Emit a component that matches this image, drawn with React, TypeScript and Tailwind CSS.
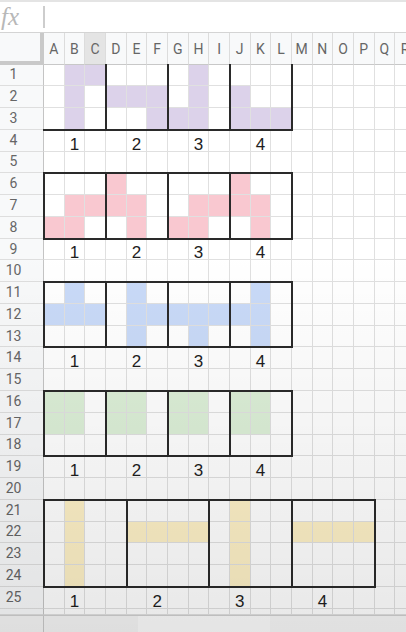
import React from 'react';

const COLS = ['A', 'B', 'C', 'D', 'E', 'F', 'G', 'H', 'I', 'J', 'K', 'L', 'M', 'N', 'O', 'P', 'Q', 'R'];

const P = 'bg-[#dcd2ea]';
const K = 'bg-[#f9c8d0]';
const U = 'bg-[#c9daf8]';
const G = 'bg-[#dcefd7]';
const Y = 'bg-[#fdf0c6]';

const fills: Record<number, Record<string, string>> = {
  1: { B: P, C: P, H: P },
  2: { B: P, D: P, E: P, F: P, H: P, J: P },
  3: { B: P, F: P, G: P, H: P, J: P, K: P, L: P },
  6: { D: K, J: K },
  7: { B: K, C: K, D: K, E: K, H: K, I: K, J: K, K: K },
  8: { A: K, B: K, E: K, G: K, H: K, K: K },
  11: { B: U, E: U, K: U },
  12: { A: U, B: U, C: U, E: U, F: U, G: U, H: U, I: U, J: U, K: U },
  13: { E: U, H: U, K: U },
  16: { A: G, B: G, D: G, E: G, G: G, H: G, J: G, K: G },
  17: { A: G, B: G, D: G, E: G, G: G, H: G, J: G, K: G },
  21: { B: Y, J: Y },
  22: { B: Y, E: Y, F: Y, G: Y, H: Y, J: Y, M: Y, N: Y, O: Y, P: Y },
  23: { B: Y, J: Y },
  24: { B: Y, J: Y },
};

const small = { B: '1', E: '2', H: '3', K: '4' };
const labels: Record<number, Record<string, string>> = {
  4: small,
  9: small,
  14: small,
  19: small,
  25: { B: '1', F: '2', J: '3', N: '4' },
};

const boxes = [
  'col-start-2 col-span-3 row-start-2 row-span-3 border-r-2 border-b-2',
  'col-start-5 col-span-3 row-start-2 row-span-3 border-l-2 border-r-2 border-b-2',
  'col-start-8 col-span-3 row-start-2 row-span-3 border-l-2 border-r-2 border-b-2',
  'col-start-11 col-span-3 row-start-2 row-span-3 border-l-2 border-r-2 border-b-2',
  'col-start-2 col-span-3 row-start-7 row-span-3 border-2',
  'col-start-5 col-span-3 row-start-7 row-span-3 border-2',
  'col-start-8 col-span-3 row-start-7 row-span-3 border-2',
  'col-start-11 col-span-3 row-start-7 row-span-3 border-2',
  'col-start-2 col-span-3 row-start-12 row-span-3 border-2',
  'col-start-5 col-span-3 row-start-12 row-span-3 border-2',
  'col-start-8 col-span-3 row-start-12 row-span-3 border-2',
  'col-start-11 col-span-3 row-start-12 row-span-3 border-2',
  'col-start-2 col-span-3 row-start-17 row-span-3 border-2',
  'col-start-5 col-span-3 row-start-17 row-span-3 border-2',
  'col-start-8 col-span-3 row-start-17 row-span-3 border-2',
  'col-start-11 col-span-3 row-start-17 row-span-3 border-2',
  'col-start-2 col-span-4 row-start-22 row-span-4 border-2',
  'col-start-6 col-span-4 row-start-22 row-span-4 border-2',
  'col-start-10 col-span-4 row-start-22 row-span-4 border-2',
  'col-start-14 col-span-4 row-start-22 row-span-4 border-2',
];

const GRID =
  'grid grid-cols-[44px_repeat(18,20.67px)] grid-rows-[31.5px_repeat(25,21.78px)_6px]';

export default function App() {
  const cells: React.ReactNode[] = [];
  cells.push(
    <div key="corner" className="bg-[#f8f9fa] border-r-4 border-b-4 border-[#c9c9c9]" />
  );
  COLS.forEach((c) => {
    cells.push(
      <div
        key={'h' + c}
        className={
          'flex items-center justify-center pt-[2px] border-r border-b border-r-[#dcdcdc] border-b-[#c8c8c8] text-[14px] text-[#666] ' +
          (c === 'C' ? 'bg-[#e4e4e4]' : 'bg-[#f8f9fa]')
        }
      >
        {c}
      </div>
    );
  });
  for (let r = 1; r <= 26; r++) {
    cells.push(
      <div
        key={'r' + r}
        className="flex items-center justify-center pr-[16px] bg-[#f8f9fa] border-r border-b border-r-[#c4c4c4] border-b-[#dedede] text-[14px] text-[#666]"
      >
        {r <= 25 ? r : ''}
      </div>
    );
    COLS.forEach((c) => {
      const fill = fills[r]?.[c] ?? '';
      const label = labels[r]?.[c];
      cells.push(
        <div
          key={r + c}
          className={
            'flex items-end justify-center border-r border-b border-[#e0e0e0] ' + fill
          }
        >
          {label && (
            <span className="font-['Liberation_Sans',Arial,sans-serif] text-[17px] leading-[12px] text-[#1e1e1e]">
              {label}
            </span>
          )}
        </div>
      );
    });
  }

  return (
    <div className="relative w-[406px] h-[632px] overflow-hidden bg-white font-['Roboto','Liberation_Sans',sans-serif]">
      <div className="h-[33px] flex items-center border-t-2 border-t-[#e4e4e4] border-b border-b-[#d4d4d4]">
        <span className="w-[43px] shrink-0 pl-[1px] font-['Liberation_Serif',serif] italic text-[25px] leading-[28px] text-[#b8b8b8]">
          fx
        </span>
        <div className="w-[2px] h-[22px] bg-[#cdcdcd]" />
      </div>
      <div className="grid">
        <div className={'col-start-1 row-start-1 ' + GRID}>{cells}</div>
        <div className={'col-start-1 row-start-1 pointer-events-none ' + GRID}>
          {boxes.map((b, i) => (
            <div key={i} className={'-m-px border-[#2a2a2a] ' + b} />
          ))}
        </div>
      </div>
      <div className="h-[17px] flex border-t border-[#d0d0d0]">
        <div className="w-[44px] bg-[#f4f4f4] border-r border-[#c8c8c8]" />
        <div className="w-[94px] bg-[#f4f4f4]" />
        <div className="w-[132px] bg-[#fbfbfb]" />
        <div className="flex-1 bg-[#f6f6f6]" />
      </div>
      <div className="absolute inset-0 pointer-events-none bg-linear-to-b from-transparent from-40% to-black/[0.09]" />
    </div>
  );
}
